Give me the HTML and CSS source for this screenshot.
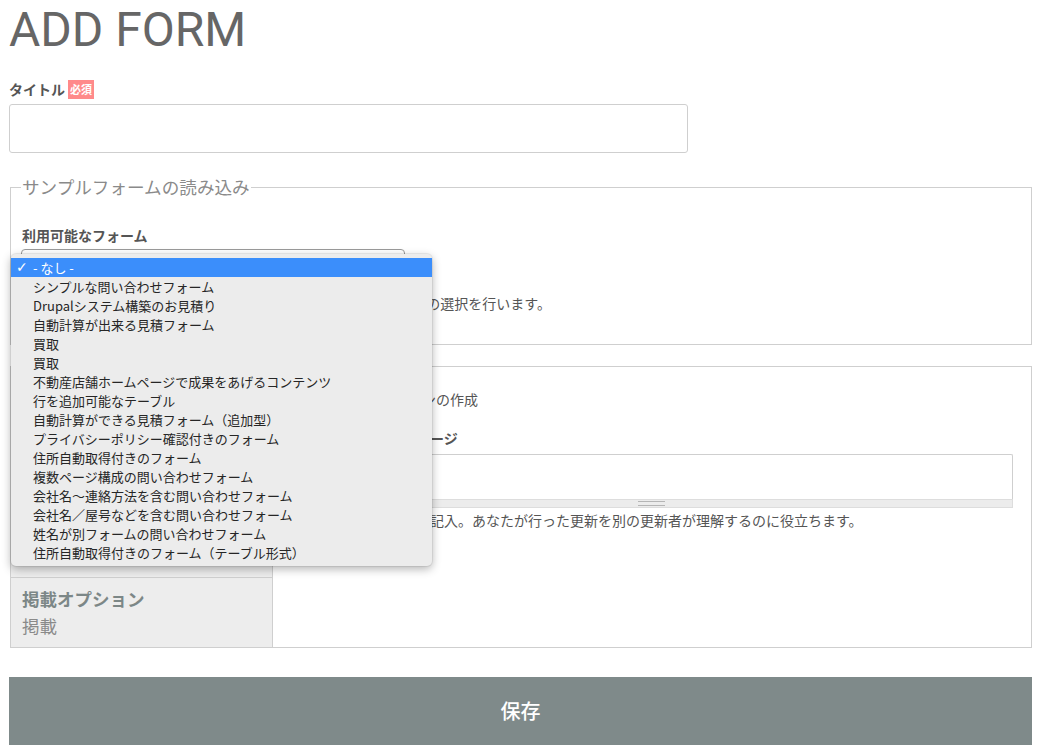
FILE: index.html
```html
<!DOCTYPE html>
<html lang="ja">
<head>
<meta charset="utf-8">
<title>ADD FORM</title>
<link rel="stylesheet" href="styles.css">
</head>
<body>
<div class="page">
  <h1 class="page-title">ADD FORM</h1>

  <div class="field field-title">
    <label class="label">タイトル<span class="required">必須</span></label>
    <input class="text-input" type="text">
  </div>

  <fieldset class="sample-fieldset">
    <legend class="legend">サンプルフォームの読み込み</legend>
    <div class="label label-forms">利用可能なフォーム</div>
    <div class="select-wrap">
      <div class="select-box"></div>
      <ul class="popup">
        <li class="opt selected"><span class="check">✓</span>- なし -</li>
        <li class="opt">シンプルな問い合わせフォーム</li>
        <li class="opt">Drupalシステム構築のお見積り</li>
        <li class="opt">自動計算が出来る見積フォーム</li>
        <li class="opt">買取</li>
        <li class="opt">買取</li>
        <li class="opt">不動産店舗ホームページで成果をあげるコンテンツ</li>
        <li class="opt">行を追加可能なテーブル</li>
        <li class="opt">自動計算ができる見積フォーム（追加型）</li>
        <li class="opt">プライバシーポリシー確認付きのフォーム</li>
        <li class="opt">住所自動取得付きのフォーム</li>
        <li class="opt">複数ページ構成の問い合わせフォーム</li>
        <li class="opt">会社名〜連絡方法を含む問い合わせフォーム</li>
        <li class="opt">会社名／屋号などを含む問い合わせフォーム</li>
        <li class="opt">姓名が別フォームの問い合わせフォーム</li>
        <li class="opt">住所自動取得付きのフォーム（テーブル形式）</li>
      </ul>
    </div>
    <div class="description desc-forms">新規作成するフォームに読み込むサンプルとなるフォームデータの選択を行います。</div>
  </fieldset>

  <div class="vtabs">
    <ul class="vtabs-menu">
      <li class="vtab vtab-first"><div class="vtab-title">リビジョン情報</div><div class="vtab-summary">新しいリビジョン</div></li>
      <li class="vtab"><div class="vtab-title">URL エイリアス設定</div><div class="vtab-summary">エイリアスなし</div></li>
      <li class="vtab"><div class="vtab-title">投稿者情報</div><div class="vtab-summary">投稿者</div></li>
      <li class="vtab vtab-last"><div class="vtab-title">掲載オプション</div><div class="vtab-summary">掲載</div></li>
    </ul>
    <div class="vtabs-pane">
      <div class="checkbox-row"><span class="checkbox"></span>新しいリビジョンの作成</div>
      <div class="label label-log">リビジョンログメッセージ</div>
      <div class="textarea-wrap">
        <div class="textarea"></div>
        <div class="grippie"><span class="grip-lines"></span></div>
      </div>
      <div class="description desc-log">変更点の簡単な説明を記入。あなたが行った更新を別の更新者が理解するのに役立ちます。</div>
    </div>
  </div>

  <div class="save-button">保存</div>
</div>
</body>
</html>
```

FILE: styles.css
```css
html, body {
  margin: 0;
  padding: 0;
  background: #fff;
}
body {
  font-family: "Noto Sans CJK JP", "Noto Sans", sans-serif;
  color: #666;
  font-size: 14px;
  line-height: 20px;
}
.page {
  padding: 0 9px;
  overflow: hidden;
  height: 745px;
}
.page-title {
  margin: 0;
  padding-top: 2px;
  font-family: Roboto, "Liberation Sans", sans-serif;
  font-weight: 400;
  font-size: 48px;
  line-height: 56px;
  height: 56px;
  color: #666;
}
.label {
  display: block;
  font-weight: 700;
  font-size: 14px;
  color: #555;
}
.field-title {
  margin-top: 20px;
}
.field-title .label {
  line-height: 22px;
  height: 22px;
  display: flex;
  align-items: center;
}
.required {
  display: inline-block;
  width: 26px;
  height: 19px;
  line-height: 19px;
  margin-left: 3px;
  background: #ff8a8a;
  color: #fff;
  font-size: 11px;
  font-weight: 700;
  text-align: center;
}
.text-input {
  display: block;
  box-sizing: border-box;
  margin: 4px 0 0;
  width: 679px;
  height: 49px;
  border: 1px solid #cfcfcf;
  border-radius: 3px;
  background: #fff;
  padding: 0 10px;
}
.sample-fieldset {
  margin: 22px 0 0 1px;
  padding: 0 11px 31px 11px;
  border: 1px solid #cfcfcf;
  min-width: 0;
}
.legend {
  padding: 0 1px;
  margin-left: -1px;
  font-size: 17.6px;
  line-height: 24px;
  color: #8a8a8a;
}
.label-forms {
  margin-top: 26px;
}
.select-wrap {
  position: relative;
  margin-top: 4px;
  width: 384px;
  margin-left: -1px;
}
.select-box {
  box-sizing: border-box;
  height: 34px;
  border: 1px solid #9a9a9a;
  border-radius: 4px;
  background: #fff;
}
.popup {
  position: absolute;
  left: -10px;
  top: 5px;
  width: 421px;
  margin: 0;
  padding: 4px 0;
  list-style: none;
  background: #ececec;
  border-radius: 5px;
  box-shadow: 0 3px 10px rgba(0, 0, 0, 0.3), 0 0 0 1px rgba(0, 0, 0, 0.06);
  z-index: 10;
}
.opt {
  position: relative;
  height: 19px;
  line-height: 19px;
  padding-left: 22px;
  font-size: 13px;
  color: #262626;
}
.opt.selected {
  background: #3b8efb;
  color: #fff;
}
.check {
  position: absolute;
  left: 5px;
  top: 0;
  font-size: 14px;
  font-family: "DejaVu Sans", sans-serif;
  font-weight: 700;
}
.description {
  font-size: 14px;
  color: #555;
}
.desc-forms {
  margin-top: 10px;
}
.vtabs {
  display: grid;
  grid-template-columns: 262px 1fr;
  margin: 21px 0 0 1px;
  height: 282px;
  box-sizing: border-box;
  border: 1px solid #cfcfcf;
}
.vtabs-menu {
  margin: 0;
  padding: 0;
  list-style: none;
  background: #ededed;
  border-right: 1px solid #cfcfcf;
  display: flex;
  flex-direction: column;
  justify-content: flex-end;
}
.vtab {
  padding: 10px 11px 10px;
  border-top: 1px solid #cfcfcf;
}
.vtab-first {
  border-top: none;
}
.vtab-title {
  font-size: 17.5px;
  font-weight: 700;
  line-height: 22px;
  color: #7c8787;
}
.vtab-summary {
  font-size: 17.5px;
  line-height: 22px;
  margin-top: 5px;
  color: #8a8a8a;
}
.vtabs-pane {
  padding: 22px 18px 0 17px;
}
.checkbox-row {
  display: flex;
  align-items: center;
  height: 20px;
  color: #555;
}
.checkbox {
  display: inline-block;
  box-sizing: border-box;
  width: 13px;
  height: 13px;
  border: 1px solid #999;
  border-radius: 2px;
  margin-right: 21px;
  background: #fff;
}
.label-log {
  margin-top: 19px;
}
.textarea-wrap {
  margin-top: 6px;
}
.textarea {
  box-sizing: border-box;
  height: 45px;
  border: 1px solid #cfcfcf;
  border-bottom: none;
  border-radius: 2px 2px 0 0;
  background: #fff;
}
.grippie {
  height: 9px;
  box-sizing: border-box;
  background: #ececec;
  border: 1px solid #ddd;
  display: flex;
  justify-content: center;
  align-items: center;
}
.grip-lines {
  display: block;
  width: 27px;
  height: 3px;
  border-top: 1px solid #b5b5b5;
  border-bottom: 1px solid #b5b5b5;
}
.desc-log {
  margin-top: 2px;
}
.save-button {
  margin-top: 29px;
  height: 68px;
  line-height: 68px;
  background: #7f8a8a;
  color: #fff;
  text-align: center;
  font-size: 20px;
  font-weight: 500;
}
```
